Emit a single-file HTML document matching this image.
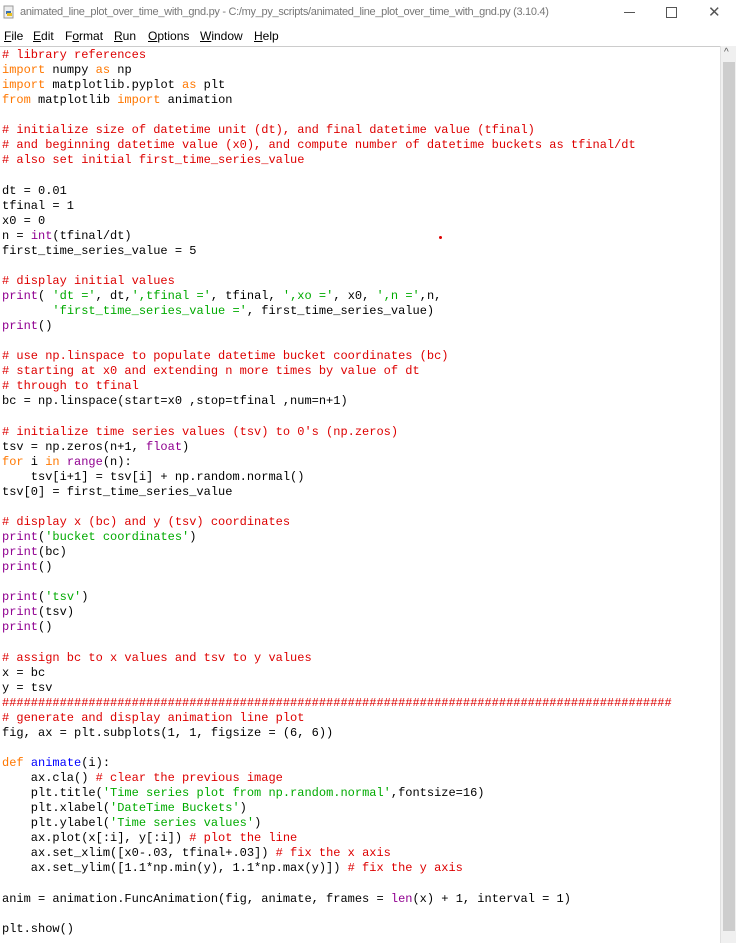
<!DOCTYPE html>
<html><head><meta charset="utf-8"><style>
body{margin:0;width:736px;height:943px;overflow:hidden;background:#fff;position:relative;font-family:"Liberation Sans",sans-serif}
#title{position:absolute;left:0;top:0;width:736px;height:25px;background:#fff;font-size:11px;color:#777}
#title .t{position:absolute;left:20px;top:6px;white-space:nowrap;letter-spacing:-0.3px}
#menu{position:absolute;left:0;top:26px;height:20px;width:736px;background:#fff;font-size:12px;color:#000}
#menu span{position:absolute;top:3px}
#editor{position:absolute;left:0;top:46px;width:720px;height:897px;border-top:1px solid #ccc;background:#fff}
pre{margin:0;position:absolute;left:2px;top:1px;font-family:"Liberation Mono",monospace;font-size:12px;line-height:15.07px;color:#000}
.c{color:#dd0000}.k{color:#ff7700}.b{color:#900090}.s{color:#00aa00}.d{color:#0000ff}
#sb{position:absolute;left:720px;top:46px;width:16px;height:897px;background:#f0f0f0;border-left:1px solid #e0e0e0}
#thumb{position:absolute;left:2px;top:16px;width:12px;height:869px;background:#cdcdcd}
</style></head><body>
<div id="title">
<svg style="position:absolute;left:3px;top:5px" width="12" height="14"><rect x="1" y="1" width="9" height="12" fill="#eee" stroke="#999"/><rect x="3" y="6" width="5" height="3" fill="#3a70b0"/><rect x="4" y="8" width="5" height="3" fill="#e8c020"/></svg>
<span class="t">animated_line_plot_over_time_with_gnd.py - C:/my_py_scripts/animated_line_plot_over_time_with_gnd.py (3.10.4)</span>
<span style="position:absolute;left:624px;top:12px;width:11px;height:1px;background:#555"></span>
<span style="position:absolute;left:666px;top:7px;width:9px;height:9px;border:1px solid #555"></span>
<span style="position:absolute;left:708px;top:3px;font-size:15px;color:#555">✕</span>
</div>
<div id="menu"><span style="left:4px"><u>F</u>ile</span><span style="left:33px"><u>E</u>dit</span><span style="left:65px">F<u>o</u>rmat</span><span style="left:114px"><u>R</u>un</span><span style="left:148px"><u>O</u>ptions</span><span style="left:200px"><u>W</u>indow</span><span style="left:254px"><u>H</u>elp</span></div>
<div id="editor"><pre><span class="c"># library references</span>
<span class="k">import</span> numpy <span class="k">as</span> np
<span class="k">import</span> matplotlib.pyplot <span class="k">as</span> plt
<span class="k">from</span> matplotlib <span class="k">import</span> animation

<span class="c"># initialize size of datetime unit (dt), and final datetime value (tfinal)</span>
<span class="c"># and beginning datetime value (x0), and compute number of datetime buckets as tfinal/dt</span>
<span class="c"># also set initial first_time_series_value</span>

dt = 0.01
tfinal = 1
x0 = 0
n = <span class="b">int</span>(tfinal/dt)
first_time_series_value = 5

<span class="c"># display initial values</span>
<span class="b">print</span>( <span class="s">'dt ='</span>, dt,<span class="s">',tfinal ='</span>, tfinal, <span class="s">',xo ='</span>, x0, <span class="s">',n ='</span>,n,
       <span class="s">'first_time_series_value ='</span>, first_time_series_value)
<span class="b">print</span>()

<span class="c"># use np.linspace to populate datetime bucket coordinates (bc)</span>
<span class="c"># starting at x0 and extending n more times by value of dt</span>
<span class="c"># through to tfinal</span>
bc = np.linspace(start=x0 ,stop=tfinal ,num=n+1)

<span class="c"># initialize time series values (tsv) to 0's (np.zeros)</span>
tsv = np.zeros(n+1, <span class="b">float</span>)
<span class="k">for</span> i <span class="k">in</span> <span class="b">range</span>(n):
    tsv[i+1] = tsv[i] + np.random.normal()
tsv[0] = first_time_series_value

<span class="c"># display x (bc) and y (tsv) coordinates</span>
<span class="b">print</span>(<span class="s">'bucket coordinates'</span>)
<span class="b">print</span>(bc)
<span class="b">print</span>()

<span class="b">print</span>(<span class="s">'tsv'</span>)
<span class="b">print</span>(tsv)
<span class="b">print</span>()

<span class="c"># assign bc to x values and tsv to y values</span>
x = bc
y = tsv
<span class="c">#############################################################################################</span>
<span class="c"># generate and display animation line plot</span>
fig, ax = plt.subplots(1, 1, figsize = (6, 6))

<span class="k">def</span> <span class="d">animate</span>(i):
    ax.cla() <span class="c"># clear the previous image</span>
    plt.title(<span class="s">'Time series plot from np.random.normal'</span>,fontsize=16)
    plt.xlabel(<span class="s">'DateTime Buckets'</span>)
    plt.ylabel(<span class="s">'Time series values'</span>)
    ax.plot(x[:i], y[:i]) <span class="c"># plot the line</span>
    ax.set_xlim([x0-.03, tfinal+.03]) <span class="c"># fix the x axis</span>
    ax.set_ylim([1.1*np.min(y), 1.1*np.max(y)]) <span class="c"># fix the y axis</span>

anim = animation.FuncAnimation(fig, animate, frames = <span class="b">len</span>(x) + 1, interval = 1)

plt.show()</pre>
<div style="position:absolute;left:439px;top:189px;width:3px;height:3px;background:#d00;border-radius:50%"></div>
</div>
<div id="sb"><span style="position:absolute;left:3px;top:1px;font-size:10px;color:#555">^</span><div id="thumb"></div></div>
</body></html>
